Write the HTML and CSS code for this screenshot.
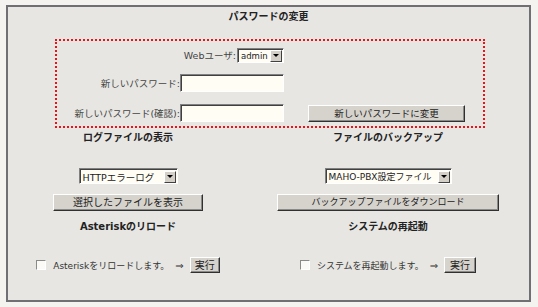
FILE: index.html
```html
<!DOCTYPE html>
<html lang="ja">
<head>
    <meta charset="UTF-8">
    <title>パスワードの変更</title>
    <link rel="stylesheet" href="styles.css">
</head>
<body>
    <div class="panel">
        <!-- Password change -->
        <div class="title">パスワードの変更</div>
        <div class="pw-box">
            <div class="pw-user">
                <span class="label">Webユーザ:</span>
                <div class="combo combo-user">
                    <span class="combo-text">admin</span>
                    <span class="combo-arrow"></span>
                </div>
            </div>
            <span></span>
            <span class="label">新しいパスワード:</span>
            <div class="field"></div>
            <span></span>
            <span class="label">新しいパスワード(確認):</span>
            <div class="field"></div>
            <div class="btn btn-change">新しいパスワードに変更</div>
        </div>

        <!-- Lower sections -->
        <div class="sections">
            <div class="col">
                <div class="title">ログファイルの表示</div>
                <div class="combo combo-log">
                    <span class="combo-text">HTTPエラーログ</span>
                    <span class="combo-arrow"></span>
                </div>
                <div class="btn btn-show">選択したファイルを表示</div>
                <div class="title title-low">Asteriskのリロード</div>
                <div class="run-row">
                    <span class="check"></span>
                    <span class="run-text">Asteriskをリロードします。</span>
                    <span class="arrow">⇒</span>
                    <div class="btn btn-run">実行</div>
                </div>
            </div>
            <div class="col">
                <div class="title">ファイルのバックアップ</div>
                <div class="combo combo-backup">
                    <span class="combo-text">MAHO-PBX設定ファイル</span>
                    <span class="combo-arrow"></span>
                </div>
                <div class="btn btn-download">バックアップファイルをダウンロード</div>
                <div class="title title-low">システムの再起動</div>
                <div class="run-row">
                    <span class="check"></span>
                    <span class="run-text">システムを再起動します。</span>
                    <span class="arrow">⇒</span>
                    <div class="btn btn-run btn-run-wide">実行</div>
                </div>
            </div>
        </div>
    </div>
</body>
</html>
```

FILE: styles.css
```css
body {
    margin: 0;
    background-color: #f4f3ef;
    font-family: "DejaVu Sans", "Noto Sans CJK JP", sans-serif;
    color: #333333;
}

/* Outer panel */
.panel {
    box-sizing: border-box;
    width: 525px;
    height: 297px;
    margin: 5px 0 0 6px;
    background-color: #e7e6e2;
    border: 2px solid #6f6f74;
}

.title {
    height: 20px;
    line-height: 20px;
    text-align: center;
    font-size: 10px;
    font-weight: bold;
    color: #222222;
}

.label {
    font-size: 9.5px;
    color: #444444;
    text-align: right;
    white-space: nowrap;
}

/* Dotted password box */
.pw-box {
    box-sizing: border-box;
    width: 430px;
    height: 89px;
    margin: 12px 0 0 47px;
    padding: 7px 18px 0 15px;
    border: 2px dotted #e8141c;
    display: grid;
    grid-template-columns: 1fr 104px 181px;
    grid-template-rows: 14px 18px 18px;
    row-gap: 12px;
    align-items: center;
}

.pw-user {
    grid-column: 1 / 3;
    display: flex;
    justify-content: flex-end;
    align-items: center;
    gap: 1px;
}

.field {
    box-sizing: border-box;
    height: 18px;
    background-color: #fffdf4;
    border: 1px solid;
    border-color: #808080 #ffffff #ffffff #808080;
    box-shadow: inset 1px 1px 0 #404040;
}

/* Fake select boxes */
.combo {
    box-sizing: border-box;
    height: 16px;
    display: flex;
    align-items: center;
    background-color: #fffdf4;
    border: 1px solid;
    border-color: #808080 #ffffff #ffffff #808080;
    box-shadow: inset 1px 1px 0 #404040;
    padding: 1px 1px 0 3px;
    font-size: 9.5px;
    color: #222222;
}

.combo-text {
    flex: 1;
    white-space: nowrap;
}

.combo-arrow {
    box-sizing: border-box;
    flex: none;
    width: 12px;
    height: 12px;
    background-color: #d4d0c8;
    border: 1px solid;
    border-color: #ffffff #404040 #404040 #ffffff;
    position: relative;
}

.combo-arrow::after {
    content: '';
    position: absolute;
    left: 2px;
    top: 3px;
    border-left: 3px solid transparent;
    border-right: 3px solid transparent;
    border-top: 3px solid #000000;
}

.combo-user {
    width: 47px;
    height: 15px;
    font-size: 8.5px;
}

.combo-log {
    width: 99px;
    margin: 20px auto 0;
}

.combo-backup {
    width: 127px;
    margin: 20px auto 0;
    font-size: 9px;
}

/* Classic buttons */
.btn {
    box-sizing: border-box;
    height: 17px;
    line-height: 15px;
    text-align: center;
    font-size: 10px;
    color: #222222;
    background-color: #d6d3cd;
    border: 1px solid;
    border-color: #ffffff #303030 #303030 #ffffff;
    box-shadow: inset -1px -1px 0 #8a8a8a;
    white-space: nowrap;
}

.btn-change {
    width: 157px;
    margin-left: 24px;
    font-size: 9.5px;
}

.btn-show {
    width: 150px;
    margin: 10px auto 0;
}

.btn-download {
    width: 222px;
    margin: 10px auto 0;
    font-size: 9px;
}

/* Two lower columns */
.sections {
    display: grid;
    grid-template-columns: 240px 280px;
}

.title-low {
    margin-top: 6px;
}

.run-row {
    margin-top: 20px;
    display: flex;
    justify-content: center;
    align-items: center;
    font-size: 9px;
    color: #333333;
}

.check {
    box-sizing: border-box;
    width: 10px;
    height: 10px;
    background-color: #fbfaf6;
    border: 1px solid;
    border-color: #8a8a8a #ffffff #ffffff #8a8a8a;
    margin-right: 7px;
}

.arrow {
    margin: 0 6px 0 6px;
    font-size: 10px;
}

.btn-run {
    width: 30px;
    height: 16px;
    font-size: 10px;
}

.btn-run-wide {
    width: 32px;
}
```
